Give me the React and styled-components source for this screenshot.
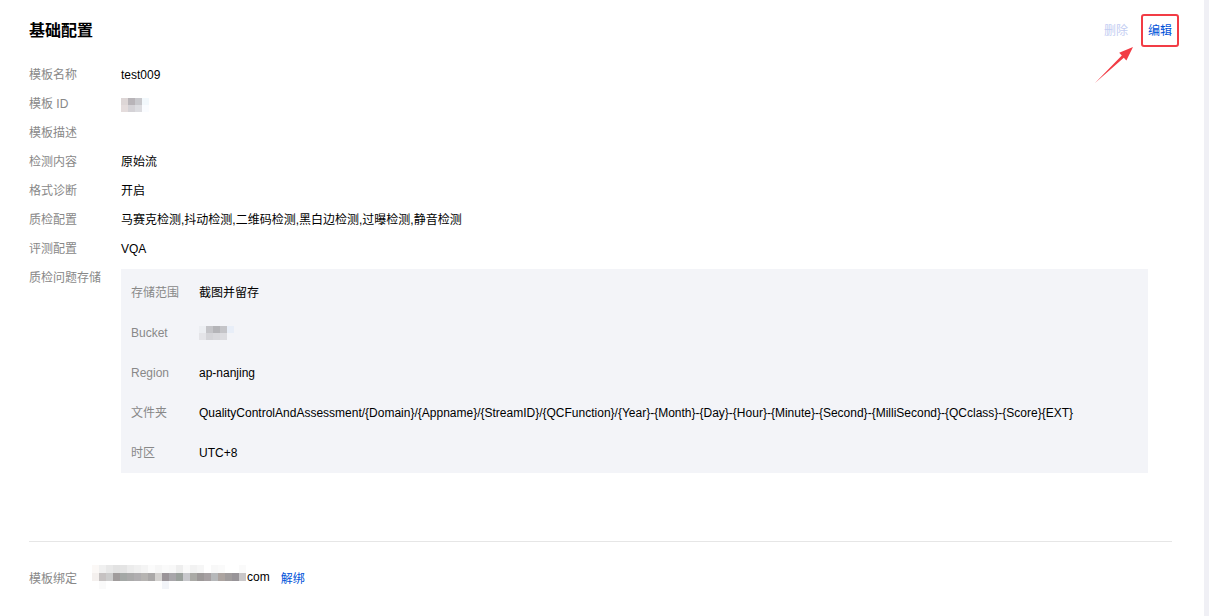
import React from "react";
import styled, { createGlobalStyle } from "styled-components";

const GlobalStyle = createGlobalStyle`
  html, body { margin: 0; padding: 0; background: #fff; }
  body {
    font-family: "Liberation Sans", Arial, "Noto Sans CJK SC", sans-serif;
    font-size: 12px;
    color: #000;
  }
`;

const Shell = styled.div`
  display: flex;
  width: 1209px;
  height: 616px;
  overflow: hidden;
`;

const Main = styled.main`
  flex: 1;
  padding: 1px 32px 0 29px;
`;

const ScrollTrack = styled.div`
  width: 5px;
  height: 100%;
  background: #f0f0f5;
`;

const Header = styled.header`
  height: 60px;
  display: flex;
  align-items: center;
  justify-content: space-between;
`;

const Title = styled.h2`
  margin: 0;
  font-size: 16px;
  font-weight: 700;
  line-height: 20px;
  color: #000;
`;

const Actions = styled.div`
  display: flex;
  align-items: center;
  gap: 20px;
`;

const ActionLink = styled.span`
  position: relative;
  font-size: 12px;
  line-height: 16px;
  color: ${(p) => (p.$disabled ? "#c3cdf2" : "#0052d9")};
  cursor: ${(p) => (p.$disabled ? "not-allowed" : "pointer")};
`;

const HighlightBox = styled.span`
  position: absolute;
  left: -7px;
  right: -7px;
  top: -9px;
  bottom: -8px;
  border: 2.5px solid #f23c45;
  border-radius: 3px;
  pointer-events: none;
`;

const Arrow = styled.svg`
  position: absolute;
  left: -58px;
  top: 17px;
  width: 50px;
  height: 50px;
  overflow: visible;
  pointer-events: none;
`;

const InfoList = styled.div`
  display: flex;
  flex-direction: column;
`;

const Row = styled.div`
  display: flex;
  align-items: flex-start;
  min-height: 29px;
`;

const Label = styled.div`
  width: ${(p) => p.$w || 92}px;
  flex-shrink: 0;
  line-height: ${(p) => p.$lh || 29}px;
  color: #888;
`;

const Value = styled.div`
  flex: 1;
  line-height: ${(p) => p.$lh || 29}px;
  color: #000;
  display: flex;
  align-items: center;
  min-height: ${(p) => p.$lh || 29}px;
`;

const StorageBox = styled.div`
  flex: 1;
  margin: 5px 24px 0 0;
  padding: 4px 10px 0;
  background: #f3f4f8;
`;

const Divider = styled.hr`
  margin: 68px 0 0;
  border: 0;
  border-top: 1px solid #e6e6e6;
`;

const BindRow = styled.div`
  display: flex;
  align-items: center;
  height: 70px;
`;

const BindLabel = styled.div`
  width: 63px;
  color: #888;
`;

const BindValue = styled.div`
  display: flex;
  align-items: center;
  gap: 11px;
`;

const Email = styled.span`
  display: flex;
  align-items: center;
  gap: 1px;
  color: #000;
`;

const Mosaic = styled.span`
  display: inline-grid;
  grid-template-columns: repeat(${(p) => p.$cols}, ${(p) => p.$cw}px);
  grid-auto-rows: ${(p) => p.$ch}px;
`;

const Cell = styled.span`
  background: ${(p) => p.$c};
`;

const Unbind = styled.span`
  color: #0052d9;
  cursor: pointer;
`;

function Blur({ rows, cw, ch }) {
  const cols = rows[0].length;
  return (
    <Mosaic $cols={cols} $cw={cw} $ch={ch}>
      {rows.flat().map((c, i) => (
        <Cell key={i} $c={c} />
      ))}
    </Mosaic>
  );
}

const idBlur = [
  ["#ddd6d6", "#b8b4b8", "#c8c8cc", "#f2f8fc"],
  ["#e4dcdc", "#d4d2d6", "#dcdce0", "#fafcff"],
];

const bucketBlur = [
  ["#eceef2", "#c4c4c8", "#b4b4b8", "#c4c4c8", "#e8eef8"],
  ["#e4e4e8", "#d4d4d8", "#d8d8dc", "#dcdce0", "#f3f4f8"],
];

const emailBlur = [
  ["#fbf8f6", "#f0f0f0", "#e8e8e8", "#e2e2e2", "#e4e4e4", "#ececec", "#f0f0f0", "#f4f4f4", "#fbfbfb", "#f6f6f6", "#fafafa", "#f8f8f8", "#eeeeee", "#fafafa", "#f2f2f2", "#f6f6f6", "#ffffff", "#f8f8f8", "#fafafa", "#ffffff", "#ffffff", "#fafafa"],
  ["#f4f0ee", "#c6c2c2", "#cccccc", "#a09c9c", "#a4a8a6", "#aaaaaa", "#b0aeb0", "#b6b4b2", "#aaa8a8", "#d4d2d0", "#9a9498", "#a8a6aa", "#9aa09c", "#c8c8cc", "#aaaaa6", "#9c9898", "#a6a0a2", "#b6b8ba", "#aca4a0", "#a09c9c", "#989498", "#c8c6c8"],
  ["#ffffff", "#fafafa", "#ffffff", "#ffffff", "#ffffff", "#ffffff", "#ffffff", "#ffffff", "#ffffff", "#ffffff", "#f2f4f8", "#ffffff", "#ffffff", "#ffffff", "#ffffff", "#ffffff", "#ffffff", "#ffffff", "#ffffff", "#ffffff", "#ffffff", "#ffffff"],
];

const basicRows = [
  ["模板名称", "test009"],
  ["模板 ID", "__ID__"],
  ["模板描述", ""],
  ["检测内容", "原始流"],
  ["格式诊断", "开启"],
  ["质检配置", "马赛克检测,抖动检测,二维码检测,黑白边检测,过曝检测,静音检测"],
  ["评测配置", "VQA"],
];

const storageRows = [
  ["存储范围", "截图并留存"],
  ["Bucket", "__BUCKET__"],
  ["Region", "ap-nanjing"],
  [
    "文件夹",
    "QualityControlAndAssessment/{Domain}/{Appname}/{StreamID}/{QCFunction}/{Year}-{Month}-{Day}-{Hour}-{Minute}-{Second}-{MilliSecond}-{QCclass}-{Score}{EXT}",
  ],
  ["时区", "UTC+8"],
];

function renderValue(v) {
  if (v === "__ID__") return <Blur rows={idBlur} cw={7} ch={7} />;
  if (v === "__BUCKET__") return <Blur rows={bucketBlur} cw={7} ch={7} />;
  return v;
}

export default function App() {
  return (
    <>
      <GlobalStyle />
      <Shell>
        <Main>
          <Header>
            <Title>基础配置</Title>
            <Actions>
              <ActionLink $disabled>删除</ActionLink>
              <ActionLink>
                编辑
                <HighlightBox />
                <Arrow viewBox="0 0 50 50">
                  <polygon
                    points="5,43 33.8,17.7 36.4,20.4 43,7 29.2,12.8 31.8,15.5"
                    fill="#f23c45"
                  />
                </Arrow>
              </ActionLink>
            </Actions>
          </Header>
          <InfoList>
            {basicRows.map(([k, v]) => (
              <Row key={k}>
                <Label>{k}</Label>
                <Value>{renderValue(v)}</Value>
              </Row>
            ))}
            <Row>
              <Label>质检问题存储</Label>
              <StorageBox>
                {storageRows.map(([k, v]) => (
                  <Row key={k}>
                    <Label $w={68} $lh={40}>
                      {k}
                    </Label>
                    <Value $lh={40}>{renderValue(v)}</Value>
                  </Row>
                ))}
              </StorageBox>
            </Row>
          </InfoList>
          <Divider />
          <BindRow>
            <BindLabel>模板绑定</BindLabel>
            <BindValue>
              <Email>
                <Blur rows={emailBlur} cw={7} ch={8} />
                com
              </Email>
              <Unbind>解绑</Unbind>
            </BindValue>
          </BindRow>
        </Main>
        <ScrollTrack />
      </Shell>
    </>
  );
}
